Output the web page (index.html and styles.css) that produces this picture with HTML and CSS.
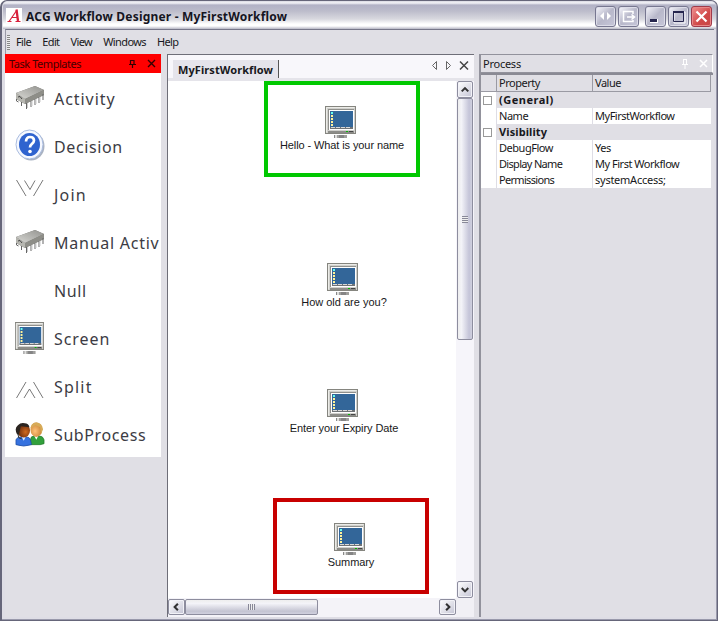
FILE: index.html
```html
<!DOCTYPE html>
<html lang="en">
<head>
<meta charset="utf-8">
<title>ACG Workflow Designer - MyFirstWorkflow</title>
<link rel="stylesheet" href="styles.css">
</head>
<body>
<svg class="defs" aria-hidden="true">
  <defs>
    <linearGradient id="chipTop" x1="0" y1="1" x2="1" y2="0"><stop offset="0" stop-color="#d8d8d4"/><stop offset="1" stop-color="#92928e"/></linearGradient>
    <radialGradient id="dark" cx=".65" cy=".6" r=".7"><stop offset="0" stop-color="#d06a20"/><stop offset="1" stop-color="#5a2008"/></radialGradient>
    <radialGradient id="fair" cx=".4" cy=".6" r=".7"><stop offset="0" stop-color="#ffc27a"/><stop offset="1" stop-color="#c07828"/></radialGradient>
    <symbol id="screen" viewBox="0 0 31 32" preserveAspectRatio="none">
      <rect x=".5" y=".5" width="30" height="27" fill="#d0d0cc" stroke="#85857f"/>
      <path d="M1.500 26.500V1.500H29.500" fill="none" stroke="#ecece8"/>
      <path d="M3 3h26v1H4v20H3z" fill="#90908c"/>
      <path d="M4 4h25v20H4z" fill="#fff"/>
      <path d="M5 5h23v18H5z" fill="#336699"/>
      <path d="M6 6h2v2H6z" fill="#6fe"/>
      <path d="M6 9h2v2H6zM6 12h2v2H6zM6 15h2v2H6zM6 18h2v2H6z" fill="#fff29a"/>
      <path d="M5 21h23v2H5z" fill="#6f7376"/>
      <path d="M6 21.500h19" stroke="#d8d8d8" stroke-dasharray="4 1"/>
      <path d="M3 25h26v2H3z" fill="#8c8c88"/><path d="M21 25h2v1h-2z" fill="#0b0"/><path d="M24 25.500h4" stroke="#444"/>
      <path d="M9 29h3v3H9z" fill="#dededc"/><path d="M9 29h1v3H9z" fill="#888"/><path d="M12 29h10v3H12z" fill="#a0a09e"/><path d="M14 29h5v3h-5z" fill="#858585"/>
    </symbol>
    <symbol id="chip" viewBox="0 0 30 26">
      <path d="M1 8 20 1 29 5v5L10 19 1 14z" fill="#777773"/>
      <path d="M1 8 20 1 29 5 10 14z" fill="url(#chipTop)"/>
      <path d="M1 8 10 14v5L1 14z" fill="#b6b6b0"/>
      <path d="M10 14 29 5v5L10 19z" fill="#8e8e88"/>
      <path d="M3 12q2-2 4 2" fill="none" stroke="#444"/>
      <path d="M1.500 14v2l2 1M6.500 17v4M11.500 18v6M16 16v6M20 14v6M24 12v6M28 9v6" fill="none" stroke="#666"/>
      <path d="M12.500 18v5M17 16v5M21 14v5M25 12v5" stroke="#ccc"/>
    </symbol>
  </defs>
</svg>
<div class="window">
  <header class="titlebar">
    <svg class="logo" width="16" height="15" viewBox="0 0 16 15"><path fill="#fff" d="M0 0h16v15H0z"/><path d="M1.500 13.500h4M9.500 13.500h5M3 13.500 11 2M6 9.500h5" fill="none" stroke="#d8203c" stroke-width="1.200"/><path d="M10.500 1.500 12 13" stroke="#d8203c" stroke-width="2.300"/></svg>
    <h1>ACG Workflow Designer - MyFirstWorkflow</h1>
    <div class="winbtns">
      <svg class="wb" viewBox="0 0 19 19"><path d="m8 5-4 4 4 4zM11 5l4 4-4 4z" fill="#fff"/></svg>
      <svg class="wb" viewBox="0 0 19 19"><path d="M14 7V4.500H4.500v10H14V13M8 10h7M12.500 7.500 15.500 10l-3 2.500" fill="none" stroke="#fff" stroke-width="1.500"/></svg>
      <svg class="wb gap" viewBox="0 0 19 19"><path d="M4 12h8v4H4z" fill="#fff"/><path d="M4 12h7v3H4z" fill="#26264e"/></svg>
      <svg class="wb" viewBox="0 0 19 19"><path d="M5 5h11v11H5z" fill="none" stroke="#fff"/><path d="M4.500 4.500h10v10h-10z" fill="none" stroke="#26264e"/><path d="M4 5h11" stroke="#26264e" stroke-width="2"/></svg>
      <svg class="wb close" viewBox="0 0 19 19"><path d="m4.500 4.500 10 10M14.500 4.500l-10 10" stroke="#fff" stroke-width="2.200"/></svg>
    </div>
  </header>
  <nav class="menu"><i class="grip"></i><span>File</span><span>Edit</span><span>View</span><span>Windows</span><span>Help</span></nav>
  <main class="work">
    <aside class="tasks">
      <div class="taskhead"><span>Task Templates</span>
        <svg width="9" height="10" viewBox="0 0 9 10"><path d="M2.500 1v4M6 1v4M2 1.500h4.500M1 5.500h7M4.500 6v3" fill="none" stroke="#300" stroke-width="1.200"/></svg>
        <svg class="x" width="9" height="9" viewBox="0 0 9 9"><path d="m1 1 7 7M8 1 1 8" stroke="#300" stroke-width="1.400"/></svg>
      </div>
      <ul>
        <li class="chip"><svg width="30" height="26"><use href="#chip"/></svg><span>Activity</span></li>
        <li><svg width="30" height="32" viewBox="0 0 30 32"><ellipse cx="16" cy="17" rx="13.500" ry="14.500" fill="#a9b2c2"/><ellipse cx="14.500" cy="15.500" rx="13.500" ry="14.500" fill="#f5f8ff" stroke="#a9bce0"/><ellipse cx="14.500" cy="15.500" rx="10.500" ry="11.500" fill="#2f63cf"/><path d="M11 12.500q.3-4.500 4-4.500 4 0 4 3.500 0 2-2.300 3.600-1.700 1.200-1.700 3.400" fill="none" stroke="#fff" stroke-width="2.700"/><circle cx="15" cy="22.500" r="1.800" fill="#fff"/></svg><span class="wide-s">Decision</span></li>
        <li><svg width="30" height="32" viewBox="0 0 30 32"><path d="m1.500 3 9.500 16M28 3l-9.500 16M9.500 3.500l5.500 9 5-9" fill="none" stroke="#555" stroke-width=".8"/></svg><span class="wide">Join</span></li>
        <li class="chip"><svg width="30" height="26"><use href="#chip"/></svg><span class="wide-m">Manual Activ</span></li>
        <li><i class="blank"></i><span class="wide-s">Null</span></li>
        <li class="mon"><svg width="30" height="32"><use href="#screen" width="29" height="32"/></svg><span>Screen</span></li>
        <li><svg width="30" height="32" viewBox="0 0 30 32"><path d="m1.500 29 9.500-16M28 29l-9.500-16M9 29l5.500-9 5.500 9" fill="none" stroke="#555" stroke-width=".8"/></svg><span class="wide">Split</span></li>
        <li class="chip"><svg width="31" height="26" viewBox="0 0 31 26"><path d="M16 24v-5q0-4 4-4h5q4 0 5 4v4l-4 1z" fill="#32a03c" stroke="#1c7424" stroke-width=".7"/><path d="m20 15 2 4 2-4z" fill="#fff"/><ellipse cx="22" cy="8.500" rx="6" ry="7.500" fill="url(#fair)"/><path d="M16 7q1-6 6-6 6 0 7 7l-2 5-1-7-5-2z" fill="#d7ab58"/><path d="M1 24v-5q1-3 5-3h6q3 0 4 3l1 5q-8 3-16 0z" fill="#3672df" stroke="#17459c" stroke-width=".7"/><path d="m7 16 2 4 2-4z" fill="#dce8ff"/><ellipse cx="9" cy="9.500" rx="6.500" ry="7" fill="url(#dark)"/><path d="M2 13Q-1 7 3 4q3-3 7-2 4 0 5 4l-9-1-2 9z" fill="#2b2420"/><path d="m3 13 1 4 3 1" fill="none" stroke="#333"/></svg><span class="wide-s">SubProcess</span></li>
      </ul>
    </aside>
    <section class="doc">
      <div class="tabs"><div class="tab"><span>MyFirstWorkflow</span></div>
        <svg width="40" height="12" viewBox="0 0 40 12"><path d="M5.500 1.500v8l-4-4zM15.500 1.500v8l4-4z" fill="none" stroke="#666"/><path d="m29 1.500 8 8M37 1.500l-8 8" stroke="#444" stroke-width="1.500"/></svg>
      </div>
      <div class="view">
        <div class="canvas">
          <div class="node n1"><svg width="31" height="32"><use href="#screen"/></svg><span>Hello - What is your name</span></div>
          <div class="node n2"><svg width="31" height="32"><use href="#screen"/></svg><span>How old are you?</span></div>
          <div class="node n3"><svg width="31" height="32"><use href="#screen"/></svg><span>Enter your Expiry Date</span></div>
          <div class="node n4"><svg width="31" height="32"><use href="#screen"/></svg><span>Summary</span></div>
        </div>
        <div class="vbar">
          <svg class="sb" viewBox="0 0 15 15"><path d="m4 9.500 3.500-3.500L11 9.500" fill="none" stroke="#333" stroke-width="2.200"/></svg>
          <div class="vthumb"><i></i></div>
          <svg class="sb end" viewBox="0 0 15 15"><path d="m4 6 3.500 3.500L11 6" fill="none" stroke="#333" stroke-width="2.200"/></svg>
        </div>
        <div class="hbar">
          <svg class="sb" viewBox="0 0 15 15"><path d="M9 4 5.500 7.500 9 11" fill="none" stroke="#333" stroke-width="2.200"/></svg>
          <div class="hthumb"><i></i></div>
          <svg class="sb right" viewBox="0 0 15 15"><path d="m6 4 3.500 3.500L6 11" fill="none" stroke="#333" stroke-width="2.200"/></svg>
        </div>
      </div>
    </section>
    <aside class="props">
      <div class="prophead"><span>Process</span>
        <svg width="8" height="11" viewBox="0 0 8 11"><path d="M2.500 1v5M5.500 1v5M2 1.500h4M1 6.500h6M4 7v4" fill="none" stroke="#fff"/></svg>
        <svg class="x" width="9" height="9" viewBox="0 0 9 9"><path d="m1 1 7 7M8 1 1 8" stroke="#fff" stroke-width="1.500"/></svg>
      </div>
      <div class="grid">
        <div class="row head"><i></i><b><span>Property</span></b><em><span>Value</span></em></div>
        <div class="row group"><i><u></u></i><b><span class="general">(General)</span></b></div>
        <div class="row"><i></i><b><span>Name</span></b><em><span>MyFirstWorkflow</span></em></div>
        <div class="row group"><i><u></u></i><b><span>Visibility</span></b></div>
        <div class="row"><i></i><b><span>DebugFlow</span></b><em><span>Yes</span></em></div>
        <div class="row"><i></i><b><span class="tight">Display Name</span></b><em><span>My First Workflow</span></em></div>
        <div class="row"><i></i><b><span class="tight">Permissions</span></b><em><span class="loose">systemAccess;</span></em></div>
      </div>
    </aside>
  </main>
</div>
</body>
</html>
```
FILE: styles.css
```css
* { box-sizing: border-box; }
html, body { margin: 0; height: 100%; overflow: hidden; background: #fff; }
body { font: 11px/16px "Noto Sans", "Open Sans", sans-serif; color: #181820; }
svg { display: block; flex: none; }
span { white-space: nowrap; }
.defs { position: absolute; width: 0; height: 0; }
.window { width: 718px; height: 621px; display: flex; flex-direction: column; padding: 0 3px 3px; border: 1px solid #66667a; border-width: 1px 1px 1px 2px; border-radius: 7px 7px 0 0; background: #dedde5; box-shadow: inset -1px -1px #9999ab; }
.titlebar { flex: 0 0 28px; margin: 0 -2px; padding: 6px 4px 0 3px; display: flex; background: linear-gradient(#dadae3 0, #f3f3f8 2px, #b2b2c6 4px, #bcbccb 10px, #d8d8df 18px, #fff 23px, #fff 25px, #b6b6c4 28px); border-radius: 6px 6px 0 0; }
.logo { margin-top: 1px; }
h1 { margin: 0 0 0 4px; font: bold 12px/20px "Noto Sans", sans-serif; color: #15151f; white-space: nowrap; letter-spacing: .19px; }
.winbtns { margin-left: auto; display: flex; gap: 2px; margin-top: -1px; }
.wb { width: 21px; height: 21px; border: 1px solid #777790; border-radius: 3px; background: linear-gradient(135deg, #f5f5fb, #b8b8ca 50%, #c7c7d9); box-shadow: inset 0 0 0 1px #dcdce8; }
.wb.gap { margin-left: 4px; }
.wb.close { background: linear-gradient(135deg, #f09090, #d04848 60%, #c84747); border-color: #a03b4b; box-shadow: inset 0 0 0 1px #e88888; }
.menu { flex: 0 0 25px; border-top: 1px solid #77778a; border-left: 1px solid #9999a6; display: flex; align-items: center; background: #e0dfe5; letter-spacing: -.6px; }
.grip { width: 3px; height: 15px; margin: 0 6px 0 1px; background: repeating-linear-gradient(#888 0 1px, #eee 1px 2px); }
.menu span { margin-right: 11px; }
.work { flex: 1; min-height: 0; display: flex; background: #e0dfe5; }
.tasks { width: 156px; overflow: hidden; }
.taskhead { height: 19px; background: #f00; display: flex; align-items: center; padding: 0 5px 0 4px; color: #400; letter-spacing: -.45px; }
.taskhead span { margin-right: auto; }
.x { margin-left: 10px; }
ul { list-style: none; margin: 0; padding: 2px 0 0 10px; height: 384px; background: #fff; }
li { display: flex; height: 48px; align-items: center; font: 16px/24px "Noto Sans", sans-serif; color: #3c3c44; letter-spacing: .95px; }
li span { margin-left: 9px; }
li svg, .blank { margin-top: -4px; flex: 0 0 30px; }
.chip svg { margin-top: -2px; }
.mon svg { margin-top: -3px; }
.wide { letter-spacing: 1.2px; }
.wide-m { letter-spacing: .75px; }
.wide-s { letter-spacing: .6px; }
.doc { width: 307px; margin-left: 6px; border-top: 1px solid #6e6e78; border-left: 1px solid #6e6e78; display: flex; flex-direction: column; }
.tabs { flex: 0 0 26px; background: #f8f7fb; border-bottom: 3px solid #e5e4ea; display: flex; padding: 5px 3px 0 5px; justify-content: space-between; }
.tab { width: 106px; background: #e5e4eb; border-right: 1px solid #555; padding: 2px 0 0 5px; font-weight: bold; font-size: 11px; letter-spacing: .08px; }
.view { flex: 1; display: grid; grid-template-columns: 288px 18px; grid-template-rows: 517px 19px; background: #f1f0f5; }
.canvas { position: relative; background: #fff; overflow: hidden; }
.node { position: absolute; width: 156px; height: 96px; padding-top: 21px; border: 4px solid transparent; display: flex; flex-direction: column; align-items: center; font: 11px/14px "Liberation Sans", sans-serif; letter-spacing: -.1px; }
.node svg { margin-left: -3px; }
.n1 { left: 96px; top: 0; border-color: #00c800; }
.n2 { left: 98px; top: 157px; letter-spacing: 0; }
.n3 { left: 98px; top: 283px; }
.n4 { left: 105px; top: 417px; border-color: #c80000; }
.vbar { display: flex; flex-direction: column; padding: 0 1px; background: #f6f5fa; }
.sb { width: 16px; height: 17px; border: 1px solid #8d8d9e; border-radius: 2px; background: linear-gradient(135deg, #fff, #c4c4d4); box-shadow: inset 0 0 0 1px #f2f2f7; }
.end { margin-top: auto; }
.vthumb { height: 242px; width: 16px; border: 1px solid #8d8d9e; border-radius: 2px; background: linear-gradient(90deg, #eee, #f3f3f8 25%, #c4c4d8 80%, #d0d0de); display: grid; place-items: center; }
.vthumb i { width: 6px; height: 7px; background: repeating-linear-gradient(#888898 0 1px, #eee 1px 2px); }
.hbar { display: flex; padding: 1px 0 0; background: #f4f3f8; }
.hthumb { width: 133px; height: 16px; border: 1px solid #8d8d9e; border-radius: 2px; background: linear-gradient(#eee, #f3f3f8 25%, #c4c4d2 80%, #d0d0de); display: grid; place-items: center; }
.hthumb i { width: 7px; height: 6px; background: repeating-linear-gradient(90deg, #888898 0 1px, #eee 1px 2px); }
.hbar .sb { width: 17px; height: 16px; }
.right { margin-left: auto; }
.props { width: 234px; margin-left: 5px; border-left: 2px solid #92929c; }
.prophead { height: 19px; display: flex; align-items: center; border-top: 1px solid #92929c; border-bottom: 1px solid #92929c; border-right: 1px solid #fff; padding: 0 4px 0 2px; letter-spacing: -.25px; }
.prophead span { margin-right: auto; }
.grid { border-top: 2px solid #8a8a94; padding-right: 2px; letter-spacing: -.48px; }
.row { display: grid; grid-template-columns: 15px 96px 1fr; height: 16px; line-height: 16px; background: #fff; }
.row > i, .row > b, .row > em { font-style: normal; font-weight: normal; }
.row b { padding-left: 2px; border-left: 1px solid #dedde5; }
.row em { padding-left: 2px; border-left: 1px solid #dedde5; }
.row .tight { letter-spacing: -.68px; }
.row .loose { letter-spacing: -.25px; }
.group > b { grid-column: 2 / 4; background: #e0dfe5; }
.group span { font-weight: bold; letter-spacing: .1px; }
.group .general { letter-spacing: .5px; }
.head { background: #e0dfe5; height: 17px; border-bottom: 1px solid #9a9aa3; border-right: 1px solid #9a9aa3; }
.head b, .head em { border-left-color: #9a9aa3; }
.row u { display: block; width: 9px; height: 9px; margin: 4px 0 0 2px; border: 1px solid #999; background: #fff; }
```
